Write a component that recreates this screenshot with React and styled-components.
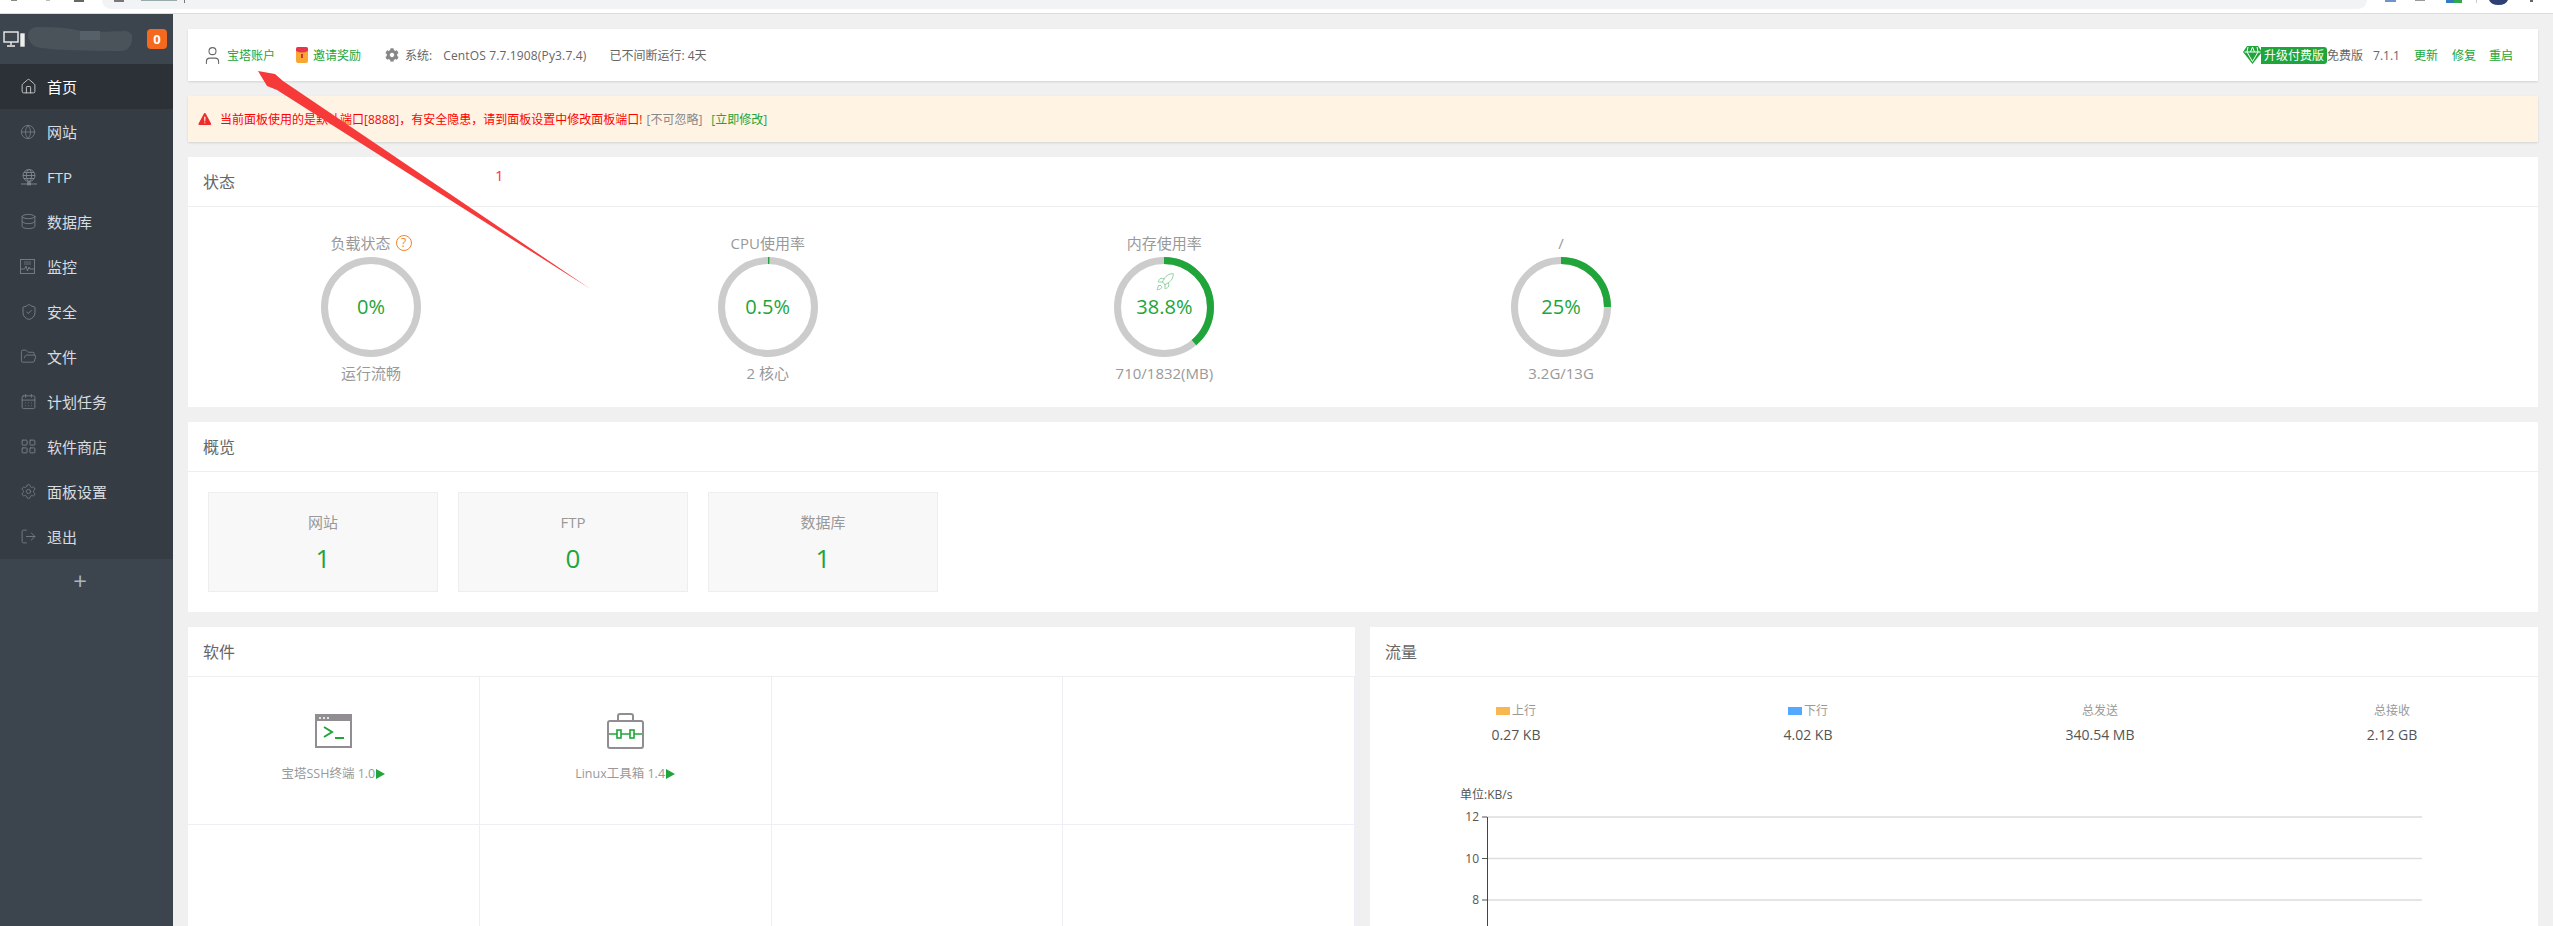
import React from "react";
import styled, { createGlobalStyle } from "styled-components";
import { House, Globe, Database, ShieldCheck, FolderOpen, CalendarDays, LayoutGrid, Settings, LogOut, User, Rocket } from "lucide-react";
import { FaCog } from "react-icons/fa";
import { IoWarning } from "react-icons/io5";

const Global = createGlobalStyle`
  html, body { margin: 0; padding: 0; height: 100%; overflow: hidden; background: #f0f0f0; }
  body { font-family: "Open Sans", "Noto Sans CJK SC", sans-serif; font-size: 12px; color: #666; }
  * { box-sizing: border-box; }
`;

const GREEN = "#20a53a";

function FtpIcon() {
  return (
    <svg width="18" height="18" viewBox="0 0 18 18" fill="none" stroke="currentColor" strokeWidth="1">
      <circle cx="9" cy="7.5" r="6" />
      <ellipse cx="9" cy="7.5" rx="2.6" ry="6" />
      <path d="M3 7.5h12M4 4.5h10M4 10.5h10M1 16h16M9 13.5V16" />
      <rect x="7.5" y="14.8" width="3" height="2" fill="currentColor" />
    </svg>
  );
}

function MonitorIcon() {
  return (
    <svg width="15" height="15" viewBox="0 0 15 15" fill="none" stroke="currentColor" strokeWidth="0.9">
      <rect x="0.5" y="0.5" width="14" height="14" />
      <path d="M1 10h3.5l1.5-3 1.5 5 1.5-4 1 2H14" />
      <path d="M4 3h7M4 5h7" strokeWidth="0.7" />
    </svg>
  );
}

const navItems = [
  { label: "首页", icon: <House size={17} strokeWidth={1.3} />, active: true },
  { label: "网站", icon: <Globe size={16} strokeWidth={1.2} /> },
  { label: "FTP", icon: <FtpIcon /> },
  { label: "数据库", icon: <Database size={17} strokeWidth={1.2} /> },
  { label: "监控", icon: <MonitorIcon /> },
  { label: "安全", icon: <ShieldCheck size={18} strokeWidth={1.2} /> },
  { label: "文件", icon: <FolderOpen size={17} strokeWidth={1.2} /> },
  { label: "计划任务", icon: <CalendarDays size={17} strokeWidth={1.2} /> },
  { label: "软件商店", icon: <LayoutGrid size={17} strokeWidth={1.3} /> },
  { label: "面板设置", icon: <Settings size={17} strokeWidth={1.1} /> },
  { label: "退出", icon: <LogOut size={17} strokeWidth={1.2} /> },
];

const rings = [
  { title: "负载状态", help: true, value: 0, text: "0%", sub: "运行流畅" },
  { title: "CPU使用率", value: 0.5, text: "0.5%", sub: "2 核心" },
  { title: "内存使用率", value: 38.8, text: "38.8%", sub: "710/1832(MB)", rocket: true },
  { title: "/", value: 25, text: "25%", sub: "3.2G/13G" },
];

const overview = [
  { label: "网站", value: 1 },
  { label: "FTP", value: 0 },
  { label: "数据库", value: 1 },
];

const flowStats = [
  { label: "上行", swatch: "#f7b851", value: "0.27 KB" },
  { label: "下行", swatch: "#52a9ff", value: "4.02 KB" },
  { label: "总发送", value: "340.54 MB" },
  { label: "总接收", value: "2.12 GB" },
];

const Page = styled.div`
  width: 2553px;
  height: 926px;
  position: relative;
  overflow: hidden;
  display: flex;
  flex-direction: column;
`;

const BrowserStrip = styled.div`
  height: 14px;
  flex: none;
  background: #fff;
  border-bottom: 1px solid #dcdcdc;
  padding: 0 186px 0 102px;
  position: relative;
`;

const AddressBar = styled.div`
  height: 9px;
  background: #f1f3f4;
  border-radius: 0 0 12px 12px;
`;

const StripScraps = styled.svg`
  position: absolute;
  left: 0;
  top: 0;
`;

const Shell = styled.div`
  flex: 1;
  display: flex;
  min-height: 0;
`;

const Sidebar = styled.aside`
  width: 173px;
  flex: none;
  background: #3c444d;
  display: flex;
  flex-direction: column;
`;

const SideHead = styled.div`
  height: 50px;
  display: flex;
  align-items: center;
  padding: 0 6px 0 3px;
  color: #eee;
`;

const Blur = styled.svg`
  margin-left: 3px;
  flex: none;
`;

const CountBadge = styled.span`
  margin-left: auto;
  width: 20px;
  height: 20px;
  border-radius: 4px;
  background: #f5691f;
  color: #fff;
  font-weight: 700;
  font-size: 13px;
  display: flex;
  align-items: center;
  justify-content: center;
`;

const NavList = styled.nav`
  background: #363c44;
`;

const NavItem = styled.div`
  height: 45px;
  display: flex;
  align-items: center;
  padding-left: 20px;
  font-size: 15px;
  background: ${(p) => (p.$active ? "#2c3138" : "transparent")};
  color: ${(p) => (p.$active ? "#fff" : "#d8dce0")};
`;

const NavIcon = styled.span`
  width: 27px;
  display: flex;
  color: ${(p) => (p.$active ? "#ccc" : "#7c8288")};
`;

const AddRow = styled.div`
  height: 42px;
  padding-right: 13px;
  display: flex;
  align-items: center;
  justify-content: center;
  color: #a9b4c4;
  font-size: 24px;
`;

const Main = styled.main`
  flex: 1;
  min-width: 0;
  padding: 15px 15px 0;
  display: flex;
  flex-direction: column;
  gap: 15px;
`;

const TopBar = styled.div`
  height: 52px;
  flex: none;
  background: #fff;
  box-shadow: 0 1px 2px rgba(0, 0, 0, 0.12);
  display: flex;
  align-items: center;
  justify-content: space-between;
  padding: 0 25px 0 14px;
`;

const BarGroup = styled.div`
  display: flex;
  align-items: center;
`;

const BarLink = styled.span`
  color: ${(p) => p.$color || "#666"};
  margin-left: ${(p) => p.$gap || 0}px;
  white-space: pre;
`;

const SystemName = styled(BarLink)`
  letter-spacing: 0.15px;
`;

const BarIcon = styled.span`
  display: flex;
  color: #666;
  margin-left: ${(p) => p.$gap || 0}px;
`;

const UpgradeWrap = styled.div`
  display: flex;
  align-items: center;
`;

const UpgradeTag = styled.span`
  background: ${GREEN};
  color: #fff;
  height: 17px;
  line-height: 17px;
  width: 66px;
  margin-left: -1px;
  text-align: center;
  border-radius: 0 3px 3px 0;
`;

const Alert = styled.div`
  height: 46px;
  flex: none;
  background: #fff3e4;
  box-shadow: 0 1px 2px rgba(0, 0, 0, 0.12);
  display: flex;
  align-items: center;
  padding-left: 9px;
  color: #f00;
`;

const AlertIcon = styled.span`
  display: flex;
  color: #ef2b2b;
  margin-right: 7px;
`;

const Card = styled.section`
  background: #fff;
  flex: none;
`;

const CardHead = styled.div`
  height: 50px;
  line-height: 50px;
  border-bottom: 1px solid #eee;
  padding-left: ${(p) => p.$pad || 15}px;
  font-size: 16px;
  color: #666;
`;

const RingRow = styled.div`
  height: 200px;
  padding: 26px 0 0 83px;
  display: grid;
  grid-template-columns: repeat(4, 200px);
  column-gap: 196.7px;
`;

const RingCol = styled.div`
  display: flex;
  flex-direction: column;
  align-items: center;
  font-size: 15px;
  color: #999;
  line-height: 20px;
`;

const RingTitle = styled.div`
  display: flex;
  align-items: center;
  gap: 5px;
  height: 20px;
  margin-bottom: 4px;
`;

const HelpMark = styled.span`
  width: 16px;
  height: 16px;
  border: 1px solid #f0862a;
  border-radius: 50%;
  color: #f0862a;
  font-size: 12px;
  line-height: 14px;
  text-align: center;
`;

const RingBox = styled.div`
  position: relative;
  width: 100px;
  height: 100px;
  margin-bottom: 6px;
`;

const RingText = styled.div`
  position: absolute;
  inset: 0;
  display: flex;
  align-items: center;
  justify-content: center;
  font-size: 20px;
  color: ${GREEN};
`;

const RingRocket = styled.div`
  position: absolute;
  left: 41px;
  top: 15px;
  display: flex;
  color: #80c794;
`;

function Ring({ value, text, rocket }) {
  const r = 46.5;
  const len = 2 * Math.PI * r;
  return (
    <RingBox>
      <svg width="100" height="100" viewBox="0 0 100 100">
        <circle cx="50" cy="50" r={r} fill="none" stroke="#ccc" strokeWidth="7" />
        <circle
          cx="50"
          cy="50"
          r={r}
          fill="none"
          stroke={GREEN}
          strokeWidth="7"
          strokeDasharray={`${(len * value) / 100} ${len}`}
          transform="rotate(-90 50 50)"
        />
      </svg>
      {rocket && (
        <RingRocket>
          <Rocket size={20} strokeWidth={1} />
        </RingRocket>
      )}
      <RingText>{text}</RingText>
    </RingBox>
  );
}

const OverviewRow = styled.div`
  height: 140px;
  padding: 20px;
  display: flex;
  gap: 20px;
`;

const OverviewBox = styled.div`
  width: 230px;
  height: 100px;
  background: #f8f8f8;
  border: 1px solid #eee;
  display: flex;
  flex-direction: column;
  align-items: center;
  padding-top: 19px;
`;

const OverviewLabel = styled.div`
  font-size: 15px;
  line-height: 20px;
  color: #999;
`;

const OverviewValue = styled.div`
  font-size: 26px;
  line-height: 36px;
  margin-top: 8px;
  color: ${GREEN};
`;

const BottomRow = styled.div`
  display: grid;
  grid-template-columns: 1fr 1fr;
  gap: 15px;
  flex: 1;
  min-height: 300px;
`;

const SoftGrid = styled.div`
  display: grid;
  grid-template-columns: repeat(4, 1fr);
  grid-auto-rows: 148px;
`;

const SoftCell = styled.div`
  border-right: 1px solid #eeeef8;
  border-bottom: 1px solid #eeeef8;
  display: flex;
  flex-direction: column;
  align-items: center;
  padding-top: 36px;
`;

const SoftIcon = styled.div`
  height: 36px;
  display: flex;
  align-items: center;
`;

const SoftName = styled.div`
  margin-top: 15px;
  display: flex;
  align-items: center;
  gap: 1px;
  font-size: 12.5px;
  line-height: 20px;
  color: #999;
`;

const PlayMark = styled.span`
  width: 0;
  height: 0;
  border-left: 9px solid ${GREEN};
  border-top: 5px solid transparent;
  border-bottom: 5px solid transparent;
`;

const FlowStats = styled.div`
  display: grid;
  grid-template-columns: repeat(4, 1fr);
  padding-top: 24px;
  text-align: center;
`;

const FlowLabel = styled.div`
  display: flex;
  align-items: center;
  justify-content: center;
  line-height: 20px;
  color: #999;
`;

const Swatch = styled.i`
  width: 14px;
  height: 8px;
  margin-right: 2px;
  background: ${(p) => p.$color};
`;

const FlowValue = styled.div`
  font-size: 14px;
  line-height: 24px;
  margin-top: 2px;
  color: #555;
`;

const FlowChart = styled.svg`
  display: block;
  margin-top: 33px;
`;

const ArrowLayer = styled.svg`
  position: absolute;
  left: 0;
  top: 0;
  pointer-events: none;
`;

const Annotation = styled.span`
  position: absolute;
  left: 495px;
  top: 165px;
  color: #f33;
  font-size: 15px;
`;

function TerminalIcon() {
  return (
    <svg width="37" height="34" viewBox="0 0 37 34" fill="none">
      <rect x="1" y="1" width="35" height="32" stroke="#918d92" strokeWidth="2" />
      <rect x="1" y="1" width="35" height="6" fill="#918d92" />
      <path d="M4 4h2M8 4h2M12 4h2" stroke="#fff" strokeWidth="1.5" />
      <path d="M9 13l8 5-8 5" stroke={GREEN} strokeWidth="2" />
      <path d="M20 24h9" stroke={GREEN} strokeWidth="2" />
    </svg>
  );
}

function ToolboxIcon() {
  return (
    <svg width="37" height="36" viewBox="0 0 37 36" fill="none">
      <rect x="1" y="8" width="35" height="27" rx="2" stroke="#918d92" strokeWidth="2" />
      <path d="M11 8V3q0-2 2-2h11q2 0 2 2v5" stroke="#918d92" strokeWidth="2" />
      <path d="M2 21h33" stroke={GREEN} strokeWidth="1.6" />
      <rect x="10" y="17" width="4" height="8" fill="#fff" stroke={GREEN} strokeWidth="1.6" />
      <rect x="23" y="17" width="4" height="8" fill="#fff" stroke={GREEN} strokeWidth="1.6" />
    </svg>
  );
}

export default function App() {
  return (
    <Page>
      <Global />
      <BrowserStrip>
        <AddressBar />
        <StripScraps width="2553" height="14">
          <rect x="11" y="0" width="6" height="1" fill="#888" />
          <rect x="46" y="0" width="4" height="1" fill="#bbb" />
          <rect x="74" y="0" width="10" height="2" fill="#666" />
          <rect x="114" y="0" width="10" height="2" fill="#777" />
          <rect x="141" y="0" width="36" height="1" fill="#9aa" />
          <rect x="184" y="0" width="1" height="3" fill="#777" />
          <rect x="2385" y="0" width="11" height="2" fill="#6f94c9" />
          <rect x="2415" y="0" width="10" height="1" fill="#999" />
          <rect x="2446" y="0" width="8" height="3" fill="#3578c4" />
          <rect x="2454" y="0" width="8" height="3" fill="#2fa84f" />
          <rect x="2476" y="0" width="1" height="3" fill="#ccc" />
          <path d="M2489 0h19q-2 5-9.500 5t-9.500-5z" fill="#2d3f73" />
          <rect x="2530" y="0" width="3" height="2" fill="#666" />
        </StripScraps>
      </BrowserStrip>
      <Shell>
        <Sidebar>
          <SideHead>
            <svg width="22" height="16" viewBox="0 0 22 16" fill="none" stroke="currentColor" strokeWidth="1.4">
              <rect x="1" y="1" width="14" height="10" />
              <path d="M8 11v3M4 15h8" />
              <rect x="18" y="3" width="3" height="12" fill="currentColor" />
            </svg>
            <Blur width="104" height="24" viewBox="0 0 104 24">
              <path d="M8 0q30 0 40 3t50 1q8 2 6 10-2 10-12 10-20 0-50-1T6 19Q0 14 0 8t8-8z" fill="#4a525a" />
              <rect x="52" y="4" width="20" height="9" fill="#566068" />
            </Blur>
            <CountBadge>0</CountBadge>
          </SideHead>
          <NavList>
            {navItems.map((item) => (
              <NavItem key={item.label} $active={item.active}>
                <NavIcon $active={item.active}>{item.icon}</NavIcon>
                {item.label}
              </NavItem>
            ))}
          </NavList>
          <AddRow>+</AddRow>
        </Sidebar>
        <Main>
          <TopBar>
            <BarGroup>
              <BarIcon>
                <User size={21} strokeWidth={1.2} />
              </BarIcon>
              <BarLink $color={GREEN} $gap={4}>宝塔账户</BarLink>
              <BarIcon $gap={21}>
                <svg width="12" height="16" viewBox="0 0 12 16">
                  <rect width="12" height="16" rx="2" fill="#f8a832" />
                  <path d="M0 2q0-2 2-2h8q2 0 2 2v2q-6 3-12 0z" fill="#e8354a" />
                  <rect x="5" y="7" width="2" height="4" fill="#c33" />
                </svg>
              </BarIcon>
              <BarLink $color={GREEN} $gap={5}>邀请奖励</BarLink>
              <BarIcon $gap={24}>
                <FaCog size={14} color="#888" />
              </BarIcon>
              <BarLink $gap={6}>系统:</BarLink>
              <SystemName $gap={11}>CentOS 7.7.1908(Py3.7.4)</SystemName>
              <BarLink $gap={23}>已不间断运行: 4天</BarLink>
            </BarGroup>
            <BarGroup>
              <UpgradeWrap>
                <svg width="19" height="20" viewBox="0 0 19 20">
                  <path d="M4 1h11l4 6-9.500 12L0 7z" fill={GREEN} />
                  <path d="M1.500 7h16M5 2l-1 5 5.500 9.500L15 7l-1-5M7.500 7l2-5 2 5" fill="none" stroke="#fff" strokeWidth="1" />
                </svg>
                <UpgradeTag>升级付费版</UpgradeTag>
              </UpgradeWrap>
              <BarLink>免费版</BarLink>
              <BarLink $gap={10}>7.1.1</BarLink>
              <BarLink $color={GREEN} $gap={14}>更新</BarLink>
              <BarLink $color={GREEN} $gap={14}>修复</BarLink>
              <BarLink $color={GREEN} $gap={13}>重启</BarLink>
            </BarGroup>
          </TopBar>
          <Alert>
            <AlertIcon>
              <IoWarning size={16} />
            </AlertIcon>
            当前面板使用的是默认端口[8888]，有安全隐患，请到面板设置中修改面板端口!
            <BarLink $color="#888" $gap={4}>[不可忽略]</BarLink>
            <BarLink $color={GREEN} $gap={9}>[立即修改]</BarLink>
          </Alert>
          <Card>
            <CardHead>状态</CardHead>
            <RingRow>
              {rings.map((ring) => (
                <RingCol key={ring.title}>
                  <RingTitle>
                    {ring.title}
                    {ring.help && <HelpMark>?</HelpMark>}
                  </RingTitle>
                  <Ring value={ring.value} text={ring.text} rocket={ring.rocket} />
                  {ring.sub}
                </RingCol>
              ))}
            </RingRow>
          </Card>
          <Card>
            <CardHead>概览</CardHead>
            <OverviewRow>
              {overview.map((box) => (
                <OverviewBox key={box.label}>
                  <OverviewLabel>{box.label}</OverviewLabel>
                  <OverviewValue>{box.value}</OverviewValue>
                </OverviewBox>
              ))}
            </OverviewRow>
          </Card>
          <BottomRow>
            <Card>
              <CardHead>软件</CardHead>
              <SoftGrid>
                <SoftCell>
                  <SoftIcon><TerminalIcon /></SoftIcon>
                  <SoftName>宝塔SSH终端 1.0<PlayMark /></SoftName>
                </SoftCell>
                <SoftCell>
                  <SoftIcon><ToolboxIcon /></SoftIcon>
                  <SoftName>Linux工具箱 1.4<PlayMark /></SoftName>
                </SoftCell>
                {Array.from({ length: 6 }, (_, i) => (
                  <SoftCell key={i} />
                ))}
              </SoftGrid>
            </Card>
            <Card>
              <CardHead>流量</CardHead>
              <FlowStats>
                {flowStats.map((stat) => (
                  <div key={stat.label}>
                    <FlowLabel>
                      {stat.swatch && <Swatch $color={stat.swatch} />}
                      {stat.label}
                    </FlowLabel>
                    <FlowValue>{stat.value}</FlowValue>
                  </div>
                ))}
              </FlowStats>
              <FlowChart width="1168" height="200" viewBox="0 0 1168 200">
                <text x="90" y="19" fontSize="12" fill="#555">单位:KB/s</text>
                {[["12", 37], ["10", 78.5], ["8", 120]].map(([label, y]) => (
                  <g key={label}>
                    <path d={`M117 ${y}H1052`} stroke="#ddd" strokeWidth="1.500" />
                    <path d={`M112 ${y}H117`} stroke="#555" />
                    <text x="109" y={y + 4} fontSize="12" fill="#555" textAnchor="end">{label}</text>
                  </g>
                ))}
                <path d="M117.500 37V200" stroke="#444" />
              </FlowChart>
            </Card>
          </BottomRow>
        </Main>
      </Shell>
      <ArrowLayer width="2553" height="926">
        <polygon points="258,71 275,74 283,81 590.500,289 277,90 267,86" fill="#f63a3a" />
      </ArrowLayer>
      <Annotation>1</Annotation>
    </Page>
  );
}
